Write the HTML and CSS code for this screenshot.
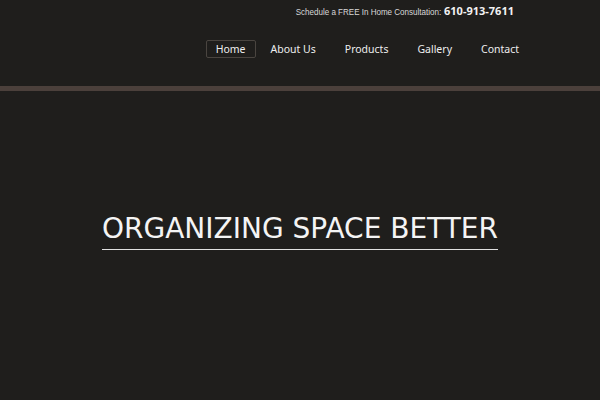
FILE: index.html
```html
<!DOCTYPE html>
<html>
<head>
<meta charset="utf-8">
<link rel="stylesheet" href="styles.css">
</head>
<body>
<header class="header">
  <div class="topline">
    <span class="sched">Schedule a FREE In Home Consultation:</span>
    <span class="phone">610-913-7611</span>
  </div>
  <nav class="nav">
    <a class="nav-item active">Home</a>
    <a class="nav-item">About Us</a>
    <a class="nav-item">Products</a>
    <a class="nav-item">Gallery</a>
    <a class="nav-item">Contact</a>
  </nav>
</header>
<div class="bar"></div>
<main class="hero">
  <h1 class="title">ORGANIZING SPACE BETTER</h1>
</main>
</body>
</html>
```
FILE: styles.css
```css
html, body {
  margin: 0;
  padding: 0;
  background: #1f1e1c;
  width: 600px;
  height: 400px;
  overflow: hidden;
}
.header {
  height: 86px;
  display: flex;
  flex-direction: column;
}
.topline {
  display: flex;
  justify-content: flex-end;
  align-items: baseline;
  gap: 3px;
  padding: 3px 86px 0 0;
  height: 18px;
}
.sched {
  display: inline-block;
  font-family: "Liberation Sans", Arial, sans-serif;
  font-size: 9.5px;
  color: #d8d8d8;
  transform: scaleX(0.845);
  transform-origin: right center;
  margin-left: -30px;
}
.phone {
  font-family: "Noto Sans", sans-serif;
  font-weight: bold;
  font-size: 11px;
  color: #f2f2f2;
}
.nav {
  display: flex;
  justify-content: flex-end;
  padding: 19px 70px 0 0;
  gap: 7px;
}
.nav-item {
  font-family: "Noto Sans", sans-serif;
  font-size: 10.5px;
  color: #eeeeee;
  padding: 0 10px;
  height: 16px;
  line-height: 16px;
  border: 1px solid transparent;
  border-radius: 2px;
}
.nav-item.active {
  border-color: #4a4540;
  padding: 0 9px;
  margin-right: -3px;
}
.bar {
  height: 5px;
  background: #4b403b;
}
.hero {
  display: flex;
  justify-content: center;
  padding-top: 121px;
}
.title {
  margin: 0;
  font-family: "DejaVu Sans", sans-serif;
  font-weight: normal;
  font-size: 28px;
  color: #f4f4f4;
  line-height: 34px;
  padding-bottom: 3px;
  border-bottom: 1px solid #e0e0e0;
}
```
